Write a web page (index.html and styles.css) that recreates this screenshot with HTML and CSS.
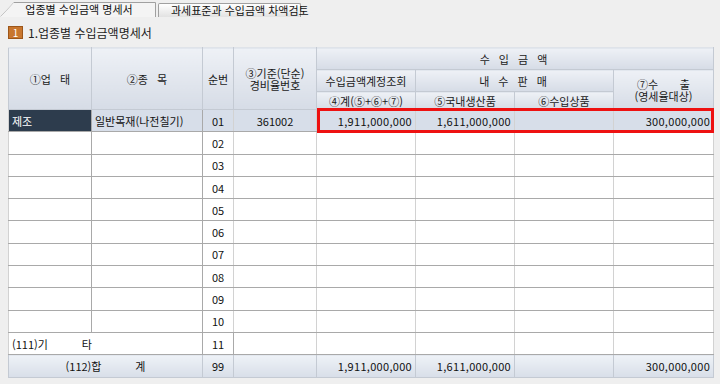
FILE: index.html
```html
<!DOCTYPE html>
<html lang="ko">
<head>
    <meta charset="UTF-8">
    <title>업종별 수입금액 명세서</title>
    <link rel="stylesheet" href="styles.css">
</head>
<body>
    <div class="tabs">
        <div class="tab tab-active">
            <svg class="tab-edge" width="156" height="17" viewBox="0 0 156 17">
                <polyline points="0.5,16.5 13.5,2.5 155.5,2.5 155.5,17" fill="none" stroke="#a0a0a0" stroke-width="1"/>
            </svg>
            <span>업종별 수입금액 명세서</span>
        </div>
        <div class="tab">과세표준과 수입금액 차액검토</div>
    </div>

    <div class="section-title">
        <span class="section-num">1</span>
        <span>1.업종별 수입금액명세서</span>
    </div>

    <div class="grid-wrap">
        <table class="grid">
            <colgroup>
                <col style="width:83px">
                <col style="width:111px">
                <col style="width:31px">
                <col style="width:83px">
                <col style="width:99px">
                <col style="width:99px">
                <col style="width:99px">
                <col style="width:100px">
            </colgroup>
            <thead>
                <tr class="h1">
                    <th rowspan="3">①업&nbsp;&nbsp;&nbsp;태</th>
                    <th rowspan="3">②종&nbsp;&nbsp;&nbsp;목</th>
                    <th rowspan="3">순번</th>
                    <th rowspan="3" class="two-line"><span class="ln">③기준(단순)</span><span class="ln">경비율번호</span></th>
                    <th colspan="4" class="spaced">수 입 금 액</th>
                </tr>
                <tr class="h2">
                    <th>수입금액계정조회</th>
                    <th colspan="2" class="spaced">내 수 판 매</th>
                    <th rowspan="2" class="two-line"><span class="ln">⑦수&nbsp;&nbsp;&nbsp;&nbsp;&nbsp;&nbsp;&nbsp;출</span><span class="ln">(영세율대상)</span></th>
                </tr>
                <tr class="h3">
                    <th>④계(⑤+⑥+⑦)</th>
                    <th>⑤국내생산품</th>
                    <th>⑥수입상품</th>
                </tr>
            </thead>
            <tbody>
                <tr class="selected">
                    <td class="cur">제조</td>
                    <td>일반목재(나전칠기)</td>
                    <td class="c">01</td>
                    <td class="c">361002</td>
                    <td class="r">1,911,000,000</td>
                    <td class="r">1,611,000,000</td>
                    <td class="r"></td>
                    <td class="r">300,000,000</td>
                </tr>
                <tr><td></td><td></td><td class="c">02</td><td></td><td></td><td></td><td></td><td></td></tr>
                <tr><td></td><td></td><td class="c">03</td><td></td><td></td><td></td><td></td><td></td></tr>
                <tr><td></td><td></td><td class="c">04</td><td></td><td></td><td></td><td></td><td></td></tr>
                <tr><td></td><td></td><td class="c">05</td><td></td><td></td><td></td><td></td><td></td></tr>
                <tr><td></td><td></td><td class="c">06</td><td></td><td></td><td></td><td></td><td></td></tr>
                <tr><td></td><td></td><td class="c">07</td><td></td><td></td><td></td><td></td><td></td></tr>
                <tr><td></td><td></td><td class="c">08</td><td></td><td></td><td></td><td></td><td></td></tr>
                <tr><td></td><td></td><td class="c">09</td><td></td><td></td><td></td><td></td><td></td></tr>
                <tr><td></td><td></td><td class="c">10</td><td></td><td></td><td></td><td></td><td></td></tr>
                <tr>
                    <td colspan="2">(111)기&nbsp;&nbsp;&nbsp;&nbsp;&nbsp;&nbsp;&nbsp;&nbsp;&nbsp;&nbsp;&nbsp;타</td>
                    <td class="c">11</td><td></td><td></td><td></td><td></td><td></td>
                </tr>
                <tr class="total">
                    <td colspan="2" class="c">(112)합&nbsp;&nbsp;&nbsp;&nbsp;&nbsp;&nbsp;&nbsp;&nbsp;&nbsp;&nbsp;&nbsp;계</td>
                    <td class="c">99</td>
                    <td></td>
                    <td class="r">1,911,000,000</td>
                    <td class="r">1,611,000,000</td>
                    <td class="r"></td>
                    <td class="r">300,000,000</td>
                </tr>
            </tbody>
        </table>
        <div class="highlight"></div>
    </div>
</body>
</html>
```

FILE: styles.css
```css
body {
    margin: 0;
    padding: 0;
    background: #efefef;
    font-family: 'Noto Sans CJK KR', 'Noto Sans', sans-serif;
    font-size: 11px;
    color: #111;
    overflow: hidden;
}

/* tab strip */
.tabs {
    display: flex;
    align-items: flex-end;
    height: 17px;
    gap: 2px;
}

.tab {
    position: relative;
    height: 14px;
    line-height: 13px;
    padding: 0 12px;
    box-sizing: border-box;
    width: 143px;
    text-align: center;
    border: 1px solid #a0a0a0;
    border-bottom: none;
    border-radius: 2px 2px 0 0;
    background: linear-gradient(#ffffff, #e2e2e2);
    color: #111;
    white-space: nowrap;
}

.tab-active {
    width: 156px;
    height: 17px;
    line-height: 17px;
    border: none;
    background: #f4f4f4;
    clip-path: polygon(0 100%, 14px 2px, 100% 2px, 100% 100%);
    padding-left: 14px;
}

.tab-edge {
    position: absolute;
    left: 0;
    top: 0;
}

.tab-active span {
    position: relative;
    top: 1px;
}

/* section title */
.section-title {
    display: flex;
    align-items: center;
    gap: 5px;
    height: 22px;
    margin: 4px 0 0 8px;
    font-size: 12px;
    color: #222;
}

.section-num {
    display: inline-block;
    width: 13px;
    height: 11px;
    line-height: 11px;
    text-align: center;
    background: #c8762e;
    border: 1px solid #9c561a;
    color: #fff;
    font-size: 10px;
}

/* grid */
.grid-wrap {
    position: relative;
    margin: 4px 0 0 8px;
    width: 705px;
}

.grid {
    width: 705px;
    table-layout: fixed;
    border-collapse: collapse;
    background: #fff;
}

.grid th {
    font-weight: normal;
    background: linear-gradient(#eef1f6, #d6dce6);
    border: 1px solid #c4cad3;
    border-top-color: #dfe3e9;
    color: #1a1a1a;
    padding: 0;
    white-space: nowrap;
    overflow: hidden;
}

.grid .h1 th { height: 21px; }
.grid .h2 th { height: 21px; }
.grid .h3 th { height: 17px; }

.grid th.two-line {
    vertical-align: middle;
}

.grid th.two-line .ln {
    display: block;
    line-height: 12px;
}

.grid th.spaced {
    letter-spacing: 3px;
}

.grid td {
    height: 21.3px;
    padding: 0 3px;
    border-top: 1px solid #a9a9a9;
    border-bottom: 1px solid #a9a9a9;
    border-left: 1px solid #d2d2d2;
    border-right: 1px solid #d2d2d2;
    white-space: nowrap;
    overflow: hidden;
    color: #111;
}

.grid td:nth-child(1),
.grid td:nth-child(2) {
    border-right-color: #a9a9a9;
}

.grid td.c { text-align: center; }
.grid td.r { text-align: right; letter-spacing: 0.3px; }

.grid tr.selected td {
    background: #d7dee9;
}

.grid tr.selected td.cur {
    background: #2d3c4d;
    color: #fff;
}

.grid tr.total td {
    background: linear-gradient(#eef2f7, #d8dee8);
    border-top-color: #b8bec7;
    border-bottom-color: #c4cad3;
    border-left-color: #c4cad3;
    border-right-color: #c4cad3;
}

.highlight {
    position: absolute;
    left: 309px;
    top: 61px;
    width: 397px;
    height: 25px;
    box-sizing: border-box;
    border: 3px solid #ee1111;
    pointer-events: none;
}
```
